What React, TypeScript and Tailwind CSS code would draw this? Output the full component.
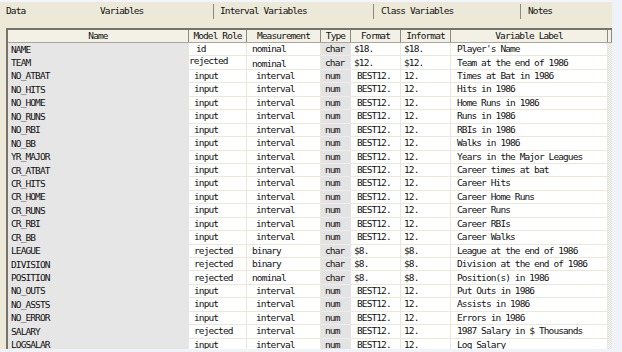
const rows: [string, string, string, string, string, string, string][] = [
  ['NAME', 'id', 'nominal', 'char', '$18.', '$18.', "Player's Name"],
  ['TEAM', 'rejected', 'nominal', 'char', '$12.', '$12.', 'Team at the end of 1986'],
  ['NO_ATBAT', 'input', 'interval', 'num', 'BEST12.', '12.', 'Times at Bat in 1986'],
  ['NO_HITS', 'input', 'interval', 'num', 'BEST12.', '12.', 'Hits in 1986'],
  ['NO_HOME', 'input', 'interval', 'num', 'BEST12.', '12.', 'Home Runs in 1986'],
  ['NO_RUNS', 'input', 'interval', 'num', 'BEST12.', '12.', 'Runs in 1986'],
  ['NO_RBI', 'input', 'interval', 'num', 'BEST12.', '12.', 'RBIs in 1986'],
  ['NO_BB', 'input', 'interval', 'num', 'BEST12.', '12.', 'Walks in 1986'],
  ['YR_MAJOR', 'input', 'interval', 'num', 'BEST12.', '12.', 'Years in the Major Leagues'],
  ['CR_ATBAT', 'input', 'interval', 'num', 'BEST12.', '12.', 'Career times at bat'],
  ['CR_HITS', 'input', 'interval', 'num', 'BEST12.', '12.', 'Career Hits'],
  ['CR_HOME', 'input', 'interval', 'num', 'BEST12.', '12.', 'Career Home Runs'],
  ['CR_RUNS', 'input', 'interval', 'num', 'BEST12.', '12.', 'Career Runs'],
  ['CR_RBI', 'input', 'interval', 'num', 'BEST12.', '12.', 'Career RBIs'],
  ['CR_BB', 'input', 'interval', 'num', 'BEST12.', '12.', 'Career Walks'],
  ['LEAGUE', 'rejected', 'binary', 'char', '$8.', '$8.', 'League at the end of 1986'],
  ['DIVISION', 'rejected', 'binary', 'char', '$8.', '$8.', 'Division at the end of 1986'],
  ['POSITION', 'rejected', 'nominal', 'char', '$8.', '$8.', 'Position(s) in 1986'],
  ['NO_OUTS', 'input', 'interval', 'num', 'BEST12.', '12.', 'Put Outs in 1986'],
  ['NO_ASSTS', 'input', 'interval', 'num', 'BEST12.', '12.', 'Assists in 1986'],
  ['NO_ERROR', 'input', 'interval', 'num', 'BEST12.', '12.', 'Errors in 1986'],
  ['SALARY', 'rejected', 'interval', 'num', 'BEST12.', '12.', '1987 Salary in $ Thousands'],
  ['LOGSALAR', 'input', 'interval', 'num', 'BEST12.', '12.', 'Log Salary'],
]

const headers = ['Name', 'Model Role', 'Measurement', 'Type', 'Format', 'Informat', 'Variable Label', '']

const cols = 'grid grid-cols-[181px_58px_74px_30px_50px_50px_157px]'
const cell = 'flex items-center whitespace-nowrap overflow-hidden'
const white = 'bg-white border-b border-r border-[#ebe8da]'

export default function App() {
  return (
    <div className="w-[622px] h-[352px] bg-[#eff3f9] overflow-hidden font-['DejaVu_Sans_Mono',monospace] text-[9.5px] tracking-[-0.9px] text-[#111]">
      <div className="w-[612px] h-[349px] bg-[#ece9d8] flex flex-col overflow-hidden border-t-2 border-[#f3f5f8]">
        {/* tabs */}
        <div className="h-[18px] pt-[1px] flex items-center shrink-0">
          <div className="w-[100px] pl-[6px]">Data</div>
          <div className="w-[113px]">Variables</div>
          <div className="w-[160px] h-[15px] flex items-center pl-[6px] border-l border-[#8c8a7e]">Interval Variables</div>
          <div className="w-[147px] h-[15px] flex items-center pl-[7px] border-l border-[#8c8a7e]">Class Variables</div>
          <div className="flex-1 h-[15px] flex items-center pl-[7px] border-l border-[#8c8a7e]">Notes</div>
        </div>

        {/* table */}
        <div className="mt-[8px] ml-[6px] flex-1 flex flex-col border-l-2 border-t-2 border-[#75736a] overflow-hidden">
          <div className="grid grid-cols-[181px_58px_74px_30px_50px_50px_157px_4px] h-[13px] bg-[#f3f1e6] border-b border-[#a9a79c] shrink-0">
            {headers.map((h, i) => (
              <div key={i} className={`${cell} justify-center border-r border-[#8d8b80]`}>{h}</div>
            ))}
          </div>
          <div className="flex-1 flex overflow-hidden">
            <div className={`${cols} auto-rows-[13.45px] content-start`}>
              {rows.map((r) => (
                <div key={r[0]} className="contents">
                  <div className={`${cell} bg-[#e6e6e6] pl-[3px]`}>{r[0]}</div>
                  <div className={`${cell} ${white} ${r[0] === 'TEAM' ? 'pl-0 pb-[3px]' : r[1] === 'id' ? 'pl-[7px]' : 'pl-[5px]'}`}>{r[1]}</div>
                  <div className={`${cell} ${white} ${r[2] === 'interval' ? 'pl-[9px]' : 'pl-[5px]'} ${r[0] === 'TEAM' ? 'pt-[2px]' : ''}`}>{r[2]}</div>
                  <div className={`${cell} bg-[#e3e3e3] border-b border-[#ededed] pl-[4px]`}>{r[3]}</div>
                  <div className={`${cell} ${white} ${r[4].startsWith('$') ? 'pl-[3px]' : 'pl-[6px]'}`}>{r[4]}</div>
                  <div className={`${cell} ${white} pl-[3px]`}>{r[5]}</div>
                  <div className={`${cell} ${white} pl-[6px]`}>{r[6]}</div>
                </div>
              ))}
            </div>
            <div className="w-[4px] bg-[repeating-conic-gradient(#dcdad0_0_25%,#ffffff_0_50%)] bg-[length:2px_2px]" />
          </div>
        </div>
      </div>
    </div>
  )
}
